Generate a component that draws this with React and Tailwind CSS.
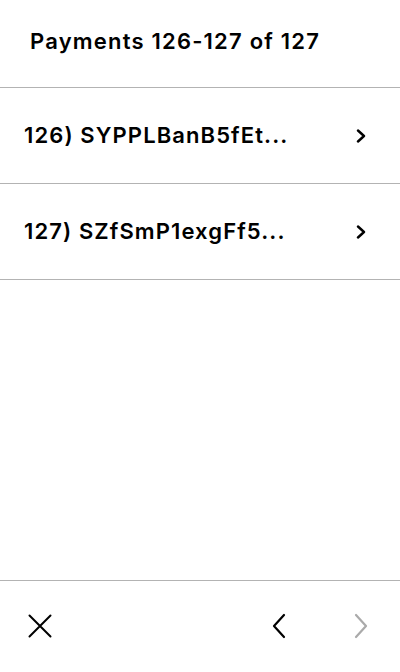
import React from 'react';

const payments = [
  { id: 126, label: 'SYPPLBanB5fEt...' },
  { id: 127, label: 'SZfSmP1exgFf5...' },
];

const Chevron = ({ dir = 'right', className = '' }) => (
  <svg viewBox="0 0 14 26" className={className} fill="none" stroke="currentColor" strokeWidth="2.2" strokeLinecap="round" strokeLinejoin="round">
    {dir === 'right' ? <path d="M2 2 L12 13 L2 24" /> : <path d="M12 2 L2 13 L12 24" />}
  </svg>
);

export default function App() {
  return (
    <div className="h-screen w-full bg-white flex flex-col text-black" style={{ fontFamily: 'Inter, "Liberation Sans", sans-serif' }}>
      {/* Header */}
      <div className="h-[88px] shrink-0 border-b border-[#b3b3b3] flex items-center pl-[30px] pb-[4px]">
        <h1 className="text-[22px] font-semibold tracking-[1.2px]">Payments 126-127 of 127</h1>
      </div>

      {/* List */}
      <div className="flex-1">
        {payments.map((p) => (
          <div key={p.id} className="h-[96px] border-b border-[#b3b3b3] flex items-center justify-between pl-[24px] pr-[34px]">
            <span className="text-[22px] font-semibold tracking-[1.1px]">{p.id}) {p.label}</span>
            <svg viewBox="0 0 10 14" className="w-[10px] h-[14px]" fill="none" stroke="currentColor" strokeWidth="2.4" strokeLinecap="round" strokeLinejoin="round">
              <path d="M2 1.5 L8 7 L2 12.5" />
            </svg>
          </div>
        ))}
      </div>

      {/* Footer */}
      <div className="h-[92px] shrink-0 border-t border-[#b3b3b3] flex items-center justify-between pl-[28px] pr-[32px] pb-[2px]">
        <svg viewBox="0 0 24 24" className="w-[24px] h-[24px]" fill="none" stroke="currentColor" strokeWidth="2" strokeLinecap="round">
          <path d="M1.5 1.5 L22.5 22.5 M22.5 1.5 L1.5 22.5" />
        </svg>
        <div className="flex items-center gap-[68px]">
          <Chevron dir="left" className="w-[14px] h-[26px] text-black" />
          <Chevron dir="right" className="w-[14px] h-[26px] text-[#aaaaaa]" />
        </div>
      </div>
    </div>
  );
}
